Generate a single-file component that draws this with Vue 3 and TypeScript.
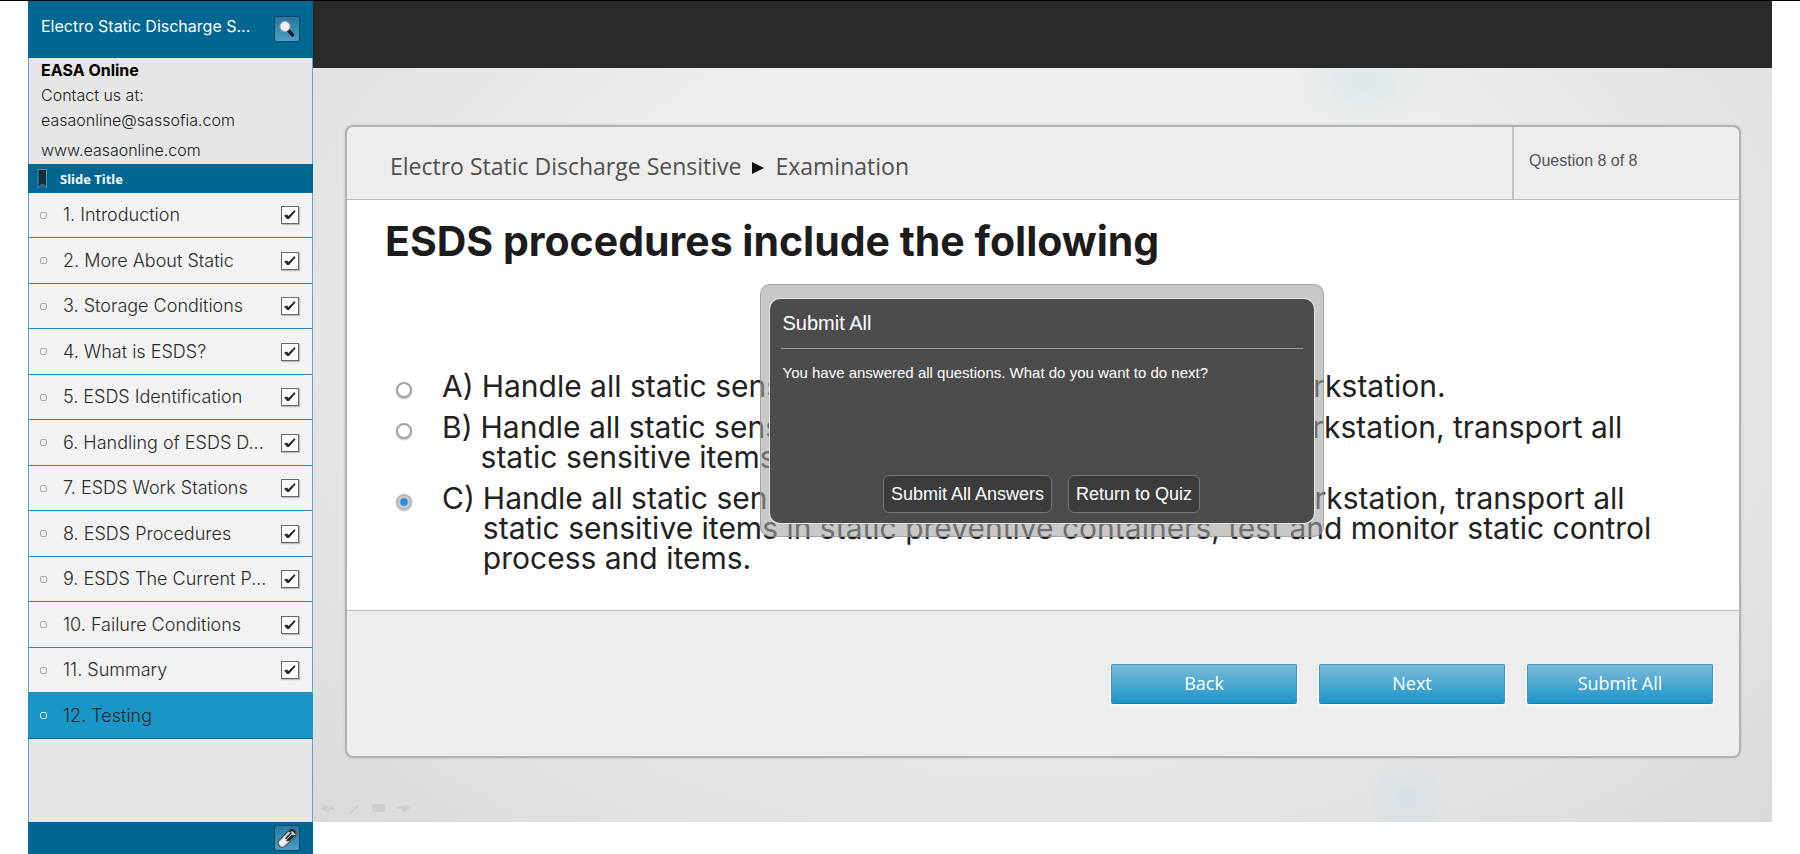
<script setup lang="ts">
import { ref } from 'vue'

interface Slide {
  title: string
  done: boolean
}

interface Answer {
  key: string
  lines: string[]
}

const slides = ref<Slide[]>([
  { title: '1. Introduction', done: true },
  { title: '2. More About Static', done: true },
  { title: '3. Storage Conditions', done: true },
  { title: '4. What is ESDS?', done: true },
  { title: '5. ESDS Identification', done: true },
  { title: '6. Handling of ESDS D...', done: true },
  { title: '7. ESDS Work Stations', done: true },
  { title: '8. ESDS Procedures', done: true },
  { title: '9. ESDS The Current P...', done: true },
  { title: '10. Failure Conditions', done: true },
  { title: '11. Summary', done: true },
  { title: '12. Testing', done: false },
])
const current = ref(11)

const answers: Answer[] = [
  { key: 'A', lines: ['Handle all static sensitive items at a static-safeguarded workstation.'] },
  {
    key: 'B',
    lines: [
      'Handle all static sensitive items at a static-safeguarded workstation, transport all',
      'static sensitive items in static preventive containers.',
    ],
  },
  {
    key: 'C',
    lines: [
      'Handle all static sensitive items at a static-safeguarded workstation, transport all',
      'static sensitive items in static preventive containers, test and monitor static control',
      'process and items.',
    ],
  },
]
const selected = ref('C')
const actions = ['Back', 'Next', 'Submit All']
</script>

<template>
  <div class="player">
    <aside class="sidebar">
      <header class="side-head">
        <span class="course">Electro Static Discharge S...</span>
        <button class="tool" type="button" aria-label="Search">
          <svg viewBox="0 0 24 24" width="24" height="24">
            <path d="M13.500 13.500L17.500 18" stroke="#14242c" stroke-width="3.400" stroke-linecap="round" />
            <circle cx="10" cy="9.500" r="5" fill="#f0f0f0" stroke="#b9a8a4" stroke-width="1" />
          </svg>
        </button>
      </header>
      <section class="contact">
        <strong>EASA Online</strong>
        <span>Contact us at:</span>
        <span>easaonline@sassofia.com</span>
        <span class="site">www.easaonline.com</span>
      </section>
      <div class="list-head">
        <svg viewBox="0 0 10 20" width="10" height="20" aria-hidden="true">
          <path d="M1 0.500H9.500V19L5.500 15L1 19Z" fill="#12303c" stroke="#5b93a8" stroke-width="1" />
        </svg>
        <span>Slide Title</span>
      </div>
      <ul class="slides">
        <li v-for="(slide, i) in slides" :key="slide.title" :class="{ active: i === current }">
          <i class="bullet"></i>
          <a href="#" @click.prevent="current = i">{{ slide.title }}</a>
          <span v-if="slide.done" class="tick">
            <input v-model="slide.done" type="checkbox" :aria-label="slide.title" />
            <svg viewBox="0 0 18 18" width="18" height="18" aria-hidden="true">
              <path d="M3 9.500L6 8.500L7.500 10L13.500 4L14.500 5.500L8 13H6Z" fill="#2c2c2c" />
            </svg>
          </span>
        </li>
      </ul>
      <footer class="side-foot">
        <button class="tool" type="button" aria-label="Attachments">
          <svg viewBox="0 0 24 24" width="24" height="24" fill="none" stroke-linecap="round">
            <path d="M7.500 17L17 7.500" stroke="#33434b" stroke-width="9.500" />
            <path d="M7.500 17L16.500 8" stroke="#c9cfd1" stroke-width="7.500" />
            <path d="M6.500 17.500L10.500 13.500" stroke="#f4f4f4" stroke-width="4.500" />
            <path d="M11 12.500L16 7M14 14.500L19 9.500M12 14.500L17 9.500" stroke="#22292c" stroke-width="1.500" />
            <path d="M14.500 5.500Q18 3 20 7" stroke="#1a1a1a" stroke-width="1.500" />
          </svg>
        </button>
      </footer>
    </aside>

    <main class="stage">
      <div class="topbar"></div>
      <div class="canvas">
        <section class="panel">
          <header class="panel-head">
            <div class="crumbs">
              <span>Electro Static Discharge Sensitive</span>
              <svg viewBox="0 0 12 16" width="12" height="16" aria-hidden="true">
                <path d="M0 4L12 10L0 16Z" fill="#111" />
              </svg>
              <span>Examination</span>
            </div>
            <div class="count">Question 8 of 8</div>
          </header>
          <div class="question">
            <h1>ESDS procedures include the following</h1>
            <div class="answers" role="radiogroup">
              <label v-for="a in answers" :key="a.key" class="answer">
                <input v-model="selected" type="radio" name="answer" :value="a.key" />
                <span class="key">{{ a.key }})</span>
                <span class="text">
                  <span v-for="line in a.lines" :key="line" class="line">{{ line }}</span>
                </span>
              </label>
            </div>
          </div>
          <footer class="panel-foot">
            <button v-for="name in actions" :key="name" type="button" class="action">{{ name }}</button>
          </footer>
        </section>
        <svg class="ghost" viewBox="0 0 92 12" width="92" height="12" aria-hidden="true" fill="#cdcfd0">
          <path d="M0 5L5 1V3H13V7H9L6 10ZM27 11L37 1L38 3L29 11ZM51 1H64V9H51ZM89 5L84 1V3H76V6H80L83 10Z" />
        </svg>
      </div>
      <div class="frame" role="dialog" aria-labelledby="dialog-title">
        <div class="dialog">
          <h2 id="dialog-title">Submit All</h2>
          <p>You have answered all questions. What do you want to do next?</p>
          <div class="choices">
            <button type="button">Submit All Answers</button>
            <button type="button">Return to Quiz</button>
          </div>
        </div>
      </div>
    </main>
  </div>
</template>

<style>
body {
  margin: 0;
  background: #fff;
}
</style>

<style scoped>
.player {
  box-sizing: border-box;
  display: flex;
  min-height: 100vh;
  padding: 0 28px;
  border-top: 1px solid #000;
  font-family: Inter, "Liberation Sans", sans-serif;
}

.player * {
  box-sizing: border-box;
}

button {
  cursor: pointer;
}

/* Sidebar */
.sidebar {
  flex: none;
  display: flex;
  flex-direction: column;
  width: 285px;
  background: #e6e6e6;
  border: 0 solid #5fa6c3;
  border-width: 0 1px;
}

.side-head,
.side-foot {
  display: flex;
  justify-content: space-between;
  margin: 0 -1px;
  padding: 0 14px 0 13px;
  background: #006792;
}

.side-head {
  height: 57px;
  padding-top: 16px;
}

.course {
  color: #fff;
  font-size: 16px;
  line-height: 18px;
}

.side-foot {
  justify-content: flex-end;
  height: 32px;
  margin-top: auto;
  padding-top: 4px;
}

.tool {
  display: grid;
  width: 24px;
  height: 24px;
  padding: 0;
  border: 0;
  border-radius: 2px;
  background: linear-gradient(#2379a0, #4f9fc0);
  box-shadow: 0 0 0 1px #0b4a66;
}

.contact {
  display: flex;
  flex-direction: column;
  height: 106px;
  padding: 0 12px;
  color: #222;
  font-size: 16px;
  font-weight: 300;
  line-height: 25px;
}

.contact strong {
  color: #000;
  font-weight: 700;
}

.contact .site {
  margin-top: 5px;
}

.list-head {
  display: flex;
  align-items: center;
  gap: 13px;
  height: 29px;
  margin: 0 -1px;
  padding-left: 9px;
  background: #006792;
  color: #fff;
  font: bold 13px "Noto Sans", sans-serif;
}

.slides {
  margin: 0;
  padding: 0;
  list-style: none;
}

.slides li {
  display: flex;
  align-items: center;
  height: 45px;
  padding: 0 13px 0 11px;
  border-bottom: 1px solid #2b86ae;
  background: #f2f2f2;
}

.slides li:nth-child(even) {
  height: 46px;
}

.slides li.active {
  margin: 0 -1px;
  padding-left: 12px;
  background: #1995c8;
  border-bottom-color: #006792;
}

.bullet {
  width: 7px;
  height: 7px;
  margin-right: 16px;
  border: 1px solid #aaa;
  border-radius: 2px;
}

.active .bullet {
  border-color: #d5e8f0;
}

.slides a {
  flex: 1;
  color: #2a2a2a;
  font-size: 18px;
  font-weight: 300;
  line-height: 24px;
  text-decoration: none;
}

.tick {
  display: grid;
}

.tick > * {
  grid-area: 1 / 1;
}

.tick input {
  appearance: none;
  width: 18px;
  height: 18px;
  margin: 0;
  border: 1px solid #6a6a6a;
  background: #fff;
  box-shadow: 1px 1px 1px #bbb;
}

.tick svg {
  pointer-events: none;
}

.tick input:not(:checked) + svg {
  visibility: hidden;
}

/* Stage */
.stage {
  position: relative;
  flex: 1;
  display: flex;
  flex-direction: column;
  min-width: 0;
  margin-bottom: 32px;
  background:
    radial-gradient(circle at 75% 97%, rgba(208, 222, 232, 0.6), transparent 48px),
    radial-gradient(ellipse 76px 50px at 72% 10%, rgba(216, 230, 233, 0.7), transparent),
    radial-gradient(ellipse at 50% 40%, #eeeeee 45%, #dadada 100%);
}

.topbar {
  height: 67px;
  background: #2a2a2a;
}

.canvas {
  position: relative;
  flex: 1;
  display: flex;
  padding: 57px 31px 64px 32px;
}

.panel {
  flex: 1;
  display: flex;
  flex-direction: column;
  min-width: 0;
  border: 2px solid #b2b2b2;
  border-radius: 8px;
  background: #ededed;
  box-shadow: 0 0 3px #c0c0c0;
}

.panel-head {
  display: flex;
  height: 73px;
  border-bottom: 1px solid #bbb;
}

.crumbs {
  flex: 1;
  display: flex;
  align-items: center;
  gap: 11px;
  padding: 6px 0 0 43px;
  color: #505050;
  font-family: "Open Sans", sans-serif;
  font-size: 23px;
}

.count {
  width: 227px;
  padding: 24px 0 0 15px;
  border-left: 2px solid #c2c2c2;
  color: #555;
  font: 16px/20px "Liberation Sans", Arial, sans-serif;
}

.question {
  flex: 1;
  padding: 15px 38px 0;
  background: #fff;
}

h1 {
  margin: 0;
  color: #1c1c1c;
  font-size: 41px;
  font-weight: 700;
  line-height: 52px;
}

.answers {
  display: flex;
  flex-direction: column;
  gap: 11px;
  padding: 104px 0 0 11px;
}

.answer {
  display: flex;
  color: #222;
  font-size: 30px;
  line-height: 30px;
  white-space: nowrap;
}

.answer input {
  appearance: none;
  flex: none;
  width: 16px;
  height: 16px;
  margin: 11px 30px 0 0;
  border: 2px solid #a4a4a4;
  border-radius: 50%;
  background: #fff;
  box-shadow: 0 1px 2px #bbb;
}

.answer input:checked {
  border-color: #b5b5b5;
  background: radial-gradient(circle, #2b8bd2 3px, #d4d4d4 5px);
}

.key {
  margin-right: 8px;
}

.line {
  display: block;
}

.panel-foot {
  display: flex;
  justify-content: flex-end;
  gap: 22px;
  height: 146px;
  padding: 53px 26px 0 0;
  border-top: 1px solid #bbb;
}

.action {
  width: 186px;
  height: 40px;
  padding: 0 0 2px;
  border: 1px solid #3d96c0;
  border-bottom-color: #1380b3;
  border-radius: 2px;
  background: linear-gradient(#7cbad8, #1c95c9);
  box-shadow: 0 3px 3px #f8f8f8;
  color: #fff;
  font: 18px "Open Sans", "Liberation Sans", sans-serif;
}

.ghost {
  position: absolute;
  left: 8px;
  bottom: 7px;
}

/* Dialog */
.frame {
  position: absolute;
  inset: 0 2px 2px 0;
  width: 564px;
  height: 253px;
  margin: auto;
  padding: 14px 9px 13px;
  border: 1px solid rgba(140, 140, 140, 0.6);
  border-radius: 10px;
  background: rgba(164, 164, 164, 0.6);
}

.dialog {
  display: flex;
  flex-direction: column;
  height: 100%;
  padding: 0 11px 10px;
  border-radius: 10px;
  background: #4c4c4c;
  box-shadow: 0 0 0 1px #e4e4e4;
  color: #fff;
  font-family: "Liberation Sans", Arial, sans-serif;
}

h2 {
  margin: 0;
  padding: 12px 2px 13px;
  border-bottom: 1px solid #9a9a9a;
  font-size: 20px;
  font-weight: 400;
  line-height: 24px;
}

.dialog p {
  margin: 14px 2px 0;
  font-size: 15px;
  line-height: 20px;
}

.choices {
  display: flex;
  justify-content: center;
  gap: 16px;
  margin-top: auto;
}

.choices button {
  height: 38px;
  padding: 0 7px;
  border: 1px solid #777;
  border-radius: 6px;
  background: #3c3c3c;
  color: #fff;
  font: 18px "Liberation Sans", Arial, sans-serif;
}
</style>
